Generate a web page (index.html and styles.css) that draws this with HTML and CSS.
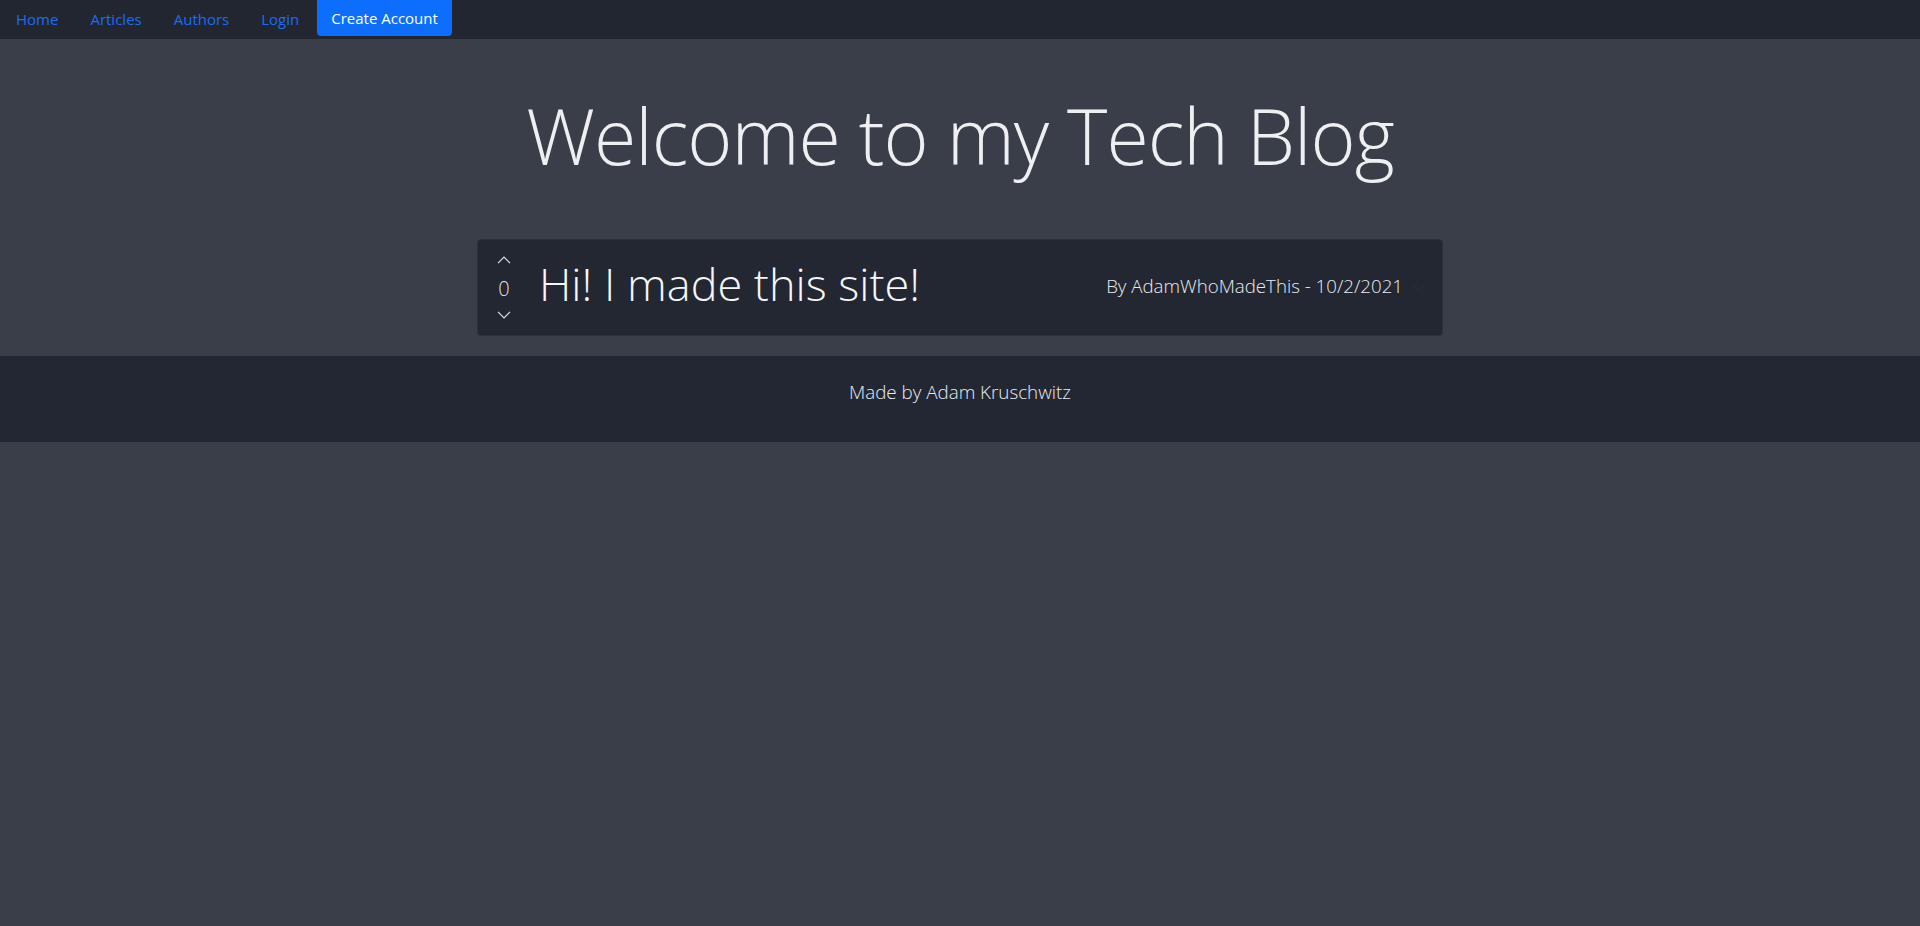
FILE: index.html
```html
<!DOCTYPE html>
<html lang="en">
<head>
<meta charset="utf-8">
<title>Tech Blog</title>
<link rel="stylesheet" href="styles.css">
</head>
<body>
<nav class="topnav">
  <a class="nav-link" href="#">Home</a>
  <a class="nav-link" href="#">Articles</a>
  <a class="nav-link" href="#">Authors</a>
  <a class="nav-link" href="#">Login</a>
  <a class="nav-link active" href="#">Create Account</a>
</nav>
<main class="hero">
  <h1 class="hero-title">Welcome to my Tech Blog</h1>
  <div class="post-card">
    <div class="votes">
      <svg class="chev" viewBox="0 0 14 8" width="14" height="8"><path d="M1 7.2 7 1.2l6 6" fill="none" stroke="currentColor" stroke-width="1.2"/></svg>
      <span class="vote-count">0</span>
      <svg class="chev" viewBox="0 0 14 8" width="14" height="8"><path d="M1 .8l6 6 6-6" fill="none" stroke="currentColor" stroke-width="1.2"/></svg>
    </div>
    <h2 class="post-title">Hi! I made this site!</h2>
    <div class="byline">By AdamWhoMadeThis - 10/2/2021</div>
    <svg class="expand" viewBox="0 0 14 8" width="14" height="8"><path d="M1 .8l6 6 6-6" fill="none" stroke="currentColor" stroke-width="1.2"/></svg>
  </div>
</main>
<footer class="site-footer">Made by Adam Kruschwitz</footer>
</body>
</html>
```
FILE: styles.css
```css
html, body {
  margin: 0;
  padding: 0;
}
body {
  background: #3a3e48;
  min-height: 926px;
  font-family: "Open Sans", "Noto Sans", sans-serif;
  color: #f0f1f3;
}
.topnav {
  display: flex;
  align-items: flex-start;
  height: 39px;
  background: #212631;
}
.nav-link {
  display: block;
  padding: 0 16px;
  height: 36px;
  line-height: 38px;
  font-size: 15px;
  color: #1f6bf0;
  text-decoration: none;
}
.nav-link.active {
  margin-left: 2px;
  padding: 0 14px;
  background: #0d6efd;
  color: #ffffff;
  border-radius: 0 0 4px 4px;
  line-height: 36px;
}
.hero {
  display: flex;
  flex-direction: column;
  align-items: center;
}
.hero-title {
  margin: 49px 0 55px;
  font-size: 77px;
  letter-spacing: -1px;
  line-height: 96px;
  font-weight: 300;
  color: #eeeff1;
}
.post-card {
  width: 966px;
  height: 97px;
  box-sizing: border-box;
  display: flex;
  align-items: center;
  padding: 0 16px;
  background: #222731;
  border: 1px solid #2b303a;
  border-radius: 4px;
}
.votes {
  display: flex;
  flex-direction: column;
  align-items: center;
  width: 20px;
  color: #dde2e8;
}
.chev {
  display: block;
}
.vote-count {
  margin: 13px 0 10px;
  font-size: 20px;
  line-height: 24px;
  font-weight: 300;
}
.post-title {
  margin: 0 0 0 25px;
  padding-bottom: 7px;
  font-size: 45px;
  font-weight: 300;
  line-height: 1.2;
  color: #f4f6f8;
  flex: 1;
}
.byline {
  padding-bottom: 5px;
  font-size: 18.7px;
  font-weight: 300;
  color: #e8ecf0;
}
.expand {
  margin-left: 9px;
  color: #2a2f39;
}
.site-footer {
  margin-top: 20px;
  height: 86px;
  box-sizing: border-box;
  padding-top: 23px;
  text-align: center;
  background: #222733;
  font-size: 18.8px;
  font-weight: 300;
  color: #e8ecf0;
}
```
